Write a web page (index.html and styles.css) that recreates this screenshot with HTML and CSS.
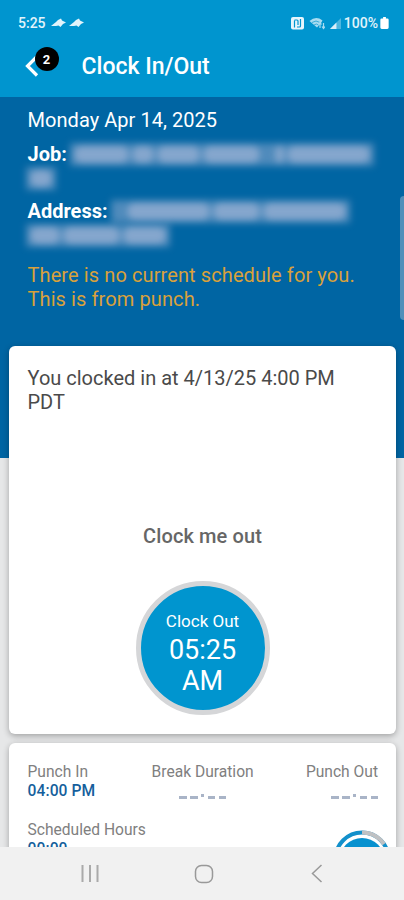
FILE: index.html
```html
<!DOCTYPE html>
<html lang="en">
<head>
    <meta charset="UTF-8">
    <meta name="viewport" content="width=device-width, initial-scale=1.0">
    <title>Clock In/Out</title>
    <link rel="stylesheet" href="styles.css">
</head>
<body>
    <div class="screen">
        <header class="main-header">
            <div class="status-bar">
                <span class="status-time">5:25</span>
                <svg class="bird" width="15" height="10" viewBox="0 0 15 10"><path d="M0 8 5 4 7 2 10 .5 11 2.500 15 4.500 12 6 9.500 9 7.500 7.500 5 8Z"/></svg>
                <svg class="bird" width="15" height="10" viewBox="0 0 15 10"><path d="M0 8 5 4 7 2 10 .5 11 2.500 15 4.500 12 6 9.500 9 7.500 7.500 5 8Z"/></svg>
                <div class="status-icons">
                    <svg width="13" height="13" viewBox="0 0 13 13">
                        <rect width="13" height="12.500" rx="2" fill="#e6f5fc"/>
                        <path d="M3.500 10.500V3.500M3.500 3H6Q7 3 7 4V8M9.500 2V9Q9.500 10 8.500 10H6" fill="none" stroke="#0095cf" stroke-width="1.200"/>
                    </svg>
                    <svg width="16" height="13" viewBox="0 0 16 13">
                        <path d="M.5 4Q7-1.500 13.500 3.500L12 6 8 10.500Z" fill="#a9dcf1"/>
                        <path d="M3 5.500Q7 2.500 11 5.500M5 8Q7.500 6 9.500 8" fill="none" stroke="#3babd8"/>
                        <path d="M11 11V6M9.500 7.500 11 5.500l1.500 2M14.500 6v5M13 9.500l1.500 2 1.500-2" fill="none" stroke="#a9dcf1" stroke-width="1.200"/>
                    </svg>
                    <svg width="11" height="11" viewBox="0 0 12 12">
                        <path d="M12 0V12H0Z" fill="#4db6df"/>
                        <path d="M7 5V12H0Z" fill="#d8effa"/>
                    </svg>
                    <span class="battery-text">100%</span>
                    <svg class="battery" width="9" height="12" viewBox="0 0 9 13"><path d="M3 0H6V1.500H7.500Q9 1.500 9 3V11.500Q9 13 7.500 13H1.500Q0 13 0 11.500V3Q0 1.500 1.500 1.500H3Z" fill="#fff"/></svg>
                </div>
            </div>
            <nav class="app-bar">
                <a class="back" href="#" aria-label="Back">
                    <svg width="14" height="22" viewBox="0 0 14 22"><path d="M11.500 2 2.500 11 12 20.500" fill="none" stroke="#fff" stroke-width="3.200"/></svg>
                    <span class="badge">2</span>
                </a>
                <h1>Clock In/Out</h1>
            </nav>
        </header>

        <main class="content">
            <div class="scroll-handle"></div>
            <section class="job-info">
                <p class="date">Monday Apr 14, 2025</p>
                <div class="field job">
                    <div class="line"><b>Job:</b><span class="redacted"><i class="w55"></i><i class="w25"></i><i class="w42"></i><i class="w56"></i><i class="w8 faint"></i><i class="w8"></i><i class="w82"></i></span></div>
                    <div class="line"><span class="redacted short"><i class="w25"></i></span></div>
                </div>
                <div class="field address">
                    <div class="line"><b>Address:</b><span class="redacted"><i class="w8 faint"></i><i class="w82"></i><i class="w48"></i><i class="w82"></i></span></div>
                    <div class="line"><span class="redacted short"><i class="w28"></i><i class="w56"></i><i class="w42"></i></span></div>
                </div>
                <p class="warning">There is no current schedule for you.<br>This is from punch.</p>
            </section>

            <section class="card clock-card">
                <p class="clocked-in">You clocked in at 4/13/25 4:00 PM<br>PDT</p>
                <h2>Clock me out</h2>
                <button type="button" class="clock-btn">
                    <span class="clock-label">Clock Out</span>
                    <span class="clock-time">05:25<br>AM</span>
                </button>
            </section>

            <section class="card punch-card">
                <div class="punch-row">
                    <div class="punch">
                        <span>Punch In</span>
                        <strong>04:00 PM</strong>
                    </div>
                    <div class="punch center">
                        <span>Break Duration</span>
                        <div class="empty-time"><i></i><i></i><i class="dot"></i><i></i><i></i></div>
                    </div>
                    <div class="punch right">
                        <span>Punch Out</span>
                        <div class="empty-time"><i></i><i></i><i class="dot"></i><i></i><i></i></div>
                    </div>
                </div>
                <div class="punch-row hours">
                    <div class="punch">
                        <span>Scheduled Hours</span>
                        <strong>00:00</strong>
                    </div>
                    <svg class="progress" width="58" height="58" viewBox="0 0 58 58">
                        <circle cx="29" cy="29" r="26.500" fill="none" stroke="#1290cb" stroke-width="4"/>
                        <path d="M29 2.500A26.500 26.500 0 0 1 51 14.200" fill="none" stroke="#bfc1c3" stroke-width="4"/>
                        <circle cx="29" cy="30.500" r="22.500" fill="#0791cf"/>
                    </svg>
                </div>
            </section>
        </main>

        <footer class="nav-bar">
            <svg width="18" height="18" viewBox="0 0 18 18"><path d="M1.500 0V17M9 0V17M16.500 0V17" stroke="#aaa" stroke-width="2"/></svg>
            <svg width="20" height="20" viewBox="0 0 20 20"><rect x="1.500" y="1.500" width="17" height="17" rx="6" fill="none" stroke="#999" stroke-width="1.500"/></svg>
            <svg width="12" height="19" viewBox="0 0 12 19"><path d="M10.500 1 1.500 9.500 10.500 18" fill="none" stroke="#999" stroke-width="1.500"/></svg>
        </footer>
    </div>
</body>
</html>
```
FILE: styles.css
```css
/* Root Variables */
:root {
    --primary-color: #0095cf;
    --primary-dark: #0065a3;
    --surface-color: #fff;
    --background-color: #e6e7e8;
    --warning-color: #d9a13b;
    --text-muted: #808080;
}

/* Base Styles */
* {
    margin: 0;
    padding: 0;
    box-sizing: border-box;
}

body {
    font-family: Roboto, sans-serif;
    color: #4a4a4a;
    background: var(--background-color);
}

svg {
    display: block;
    flex-shrink: 0;
}

.screen {
    display: flex;
    flex-direction: column;
    height: 900px;
    overflow: hidden;
}

/* Header */
.main-header {
    flex: 0 0 97px;
    background: var(--primary-color);
    color: #fff;
}

.status-bar {
    display: flex;
    align-items: center;
    height: 46px;
    padding: 0 15px 0 18px;
    font-size: 14px;
    color: #e2f4fb;
}

.status-time {
    width: 33px;
    font-weight: 500;
}

.bird {
    margin-right: 3px;
    fill: #e2f4fb;
}

.status-icons {
    display: flex;
    align-items: center;
    gap: 5px;
    margin-left: auto;
}

.battery-text {
    font-weight: 500;
    margin-left: -2px;
}

.battery {
    margin-left: -3px;
}

.app-bar {
    display: flex;
    align-items: center;
    height: 40px;
    padding-left: 24.5px;
}

.back {
    position: relative;
    width: 57px;
}

.badge {
    position: absolute;
    top: -8px;
    left: 10px;
    width: 24px;
    height: 24px;
    border-radius: 50%;
    background: #000;
    color: #fff;
    font-size: 13px;
    font-weight: 700;
    line-height: 25px;
    text-align: center;
}

.app-bar h1 {
    font-size: 23px;
    font-weight: 500;
}

/* Main Content */
.content {
    position: relative;
    flex: 1;
    overflow: hidden;
    background: linear-gradient(var(--primary-dark) 361px, var(--background-color) 361px);
}

.scroll-handle {
    position: absolute;
    top: 99px;
    right: 0;
    width: 4px;
    height: 124px;
    border-radius: 4px 0 0 4px;
    background: #508fba;
}

.job-info {
    height: 249px;
    padding: 11px 20px 0 27.5px;
    color: #fff;
    font-size: 20px;
    line-height: 24px;
}

.date {
    letter-spacing: 0.05px;
}

.field {
    margin-top: 10px;
}

.address {
    margin-top: 9px;
}

.line {
    display: flex;
    align-items: center;
    height: 24px;
}

.redacted {
    display: flex;
    gap: 3px;
    margin-left: 3px;
    padding: 3px 4px;
    background: rgba(160, 178, 213, 0.45);
    filter: blur(3.5px);
}

.redacted.short {
    margin-left: -2px;
}

.redacted i {
    height: 17px;
    border-radius: 8px;
    background: #a6b7d8;
    opacity: 0.65;
}

.redacted .faint { opacity: 0.1; }
.redacted .w8 { width: 9px; }
.redacted .w25 { width: 22px; }
.redacted .w28 { width: 30px; }
.redacted .w42 { width: 43px; }
.redacted .w48 { width: 47px; }
.redacted .w55 { width: 55px; }
.redacted .w56 { width: 57px; }
.redacted .w82 { width: 83px; }

.warning {
    margin-top: 16px;
    letter-spacing: 0.1px;
    color: var(--warning-color);
}

/* Cards */
.card {
    margin: 0 8px 9px 9px;
    border-radius: 6px;
    background: var(--surface-color);
    box-shadow: 0 2px 6px rgba(0, 0, 0, 0.3);
}

.clock-card {
    display: flex;
    flex-direction: column;
    align-items: center;
    height: 388px;
    padding: 21px 18px 0;
}

.clocked-in {
    width: 100%;
    padding-left: 0.5px;
    font-size: 20px;
    line-height: 23.5px;
}

.clock-card h2 {
    margin-top: 110px;
    font-size: 20px;
    font-weight: 500;
    letter-spacing: 0.1px;
    line-height: 24px;
    color: #666;
}

.clock-btn {
    display: flex;
    flex-direction: column;
    align-items: center;
    width: 134px;
    height: 134px;
    margin-top: 33px;
    padding-top: 24px;
    border: 5px solid #d5d6d8;
    border-radius: 50%;
    background: var(--primary-color);
    color: #fff;
    font-family: inherit;
}

.clock-label {
    font-size: 17px;
    line-height: 22px;
}

.clock-time {
    margin-top: 3px;
    font-size: 27px;
    line-height: 31px;
}

.punch-card {
    height: 160px;
    padding: 20px 18px 0 18.5px;
}

.punch-row {
    display: flex;
    justify-content: space-between;
}

.punch {
    display: flex;
    flex-direction: column;
    font-size: 15.6px;
    line-height: 19px;
    color: var(--text-muted);
}

.punch strong {
    font-weight: 500;
    line-height: 18px;
    letter-spacing: 0.1px;
    color: #155f9c;
}

.center {
    align-items: center;
    margin-left: 4px;
}

.right {
    align-items: flex-end;
}

.empty-time {
    display: flex;
    gap: 3.5px;
    padding-top: 14px;
}

.empty-time i {
    width: 7.5px;
    height: 3px;
    background: #a9b4c7;
}

.empty-time .dot {
    width: 3px;
    margin-top: -2px;
}

.hours {
    margin-top: 21px;
}

.progress {
    margin: 9px -13px 0 0;
}

/* System navigation */
.nav-bar {
    display: flex;
    justify-content: space-between;
    align-items: center;
    flex: 0 0 53px;
    padding: 0 81px 0 81px;
    background: #f1f1f1;
}

.nav-bar svg:nth-child(2) {
    margin-right: 3px;
}
```
